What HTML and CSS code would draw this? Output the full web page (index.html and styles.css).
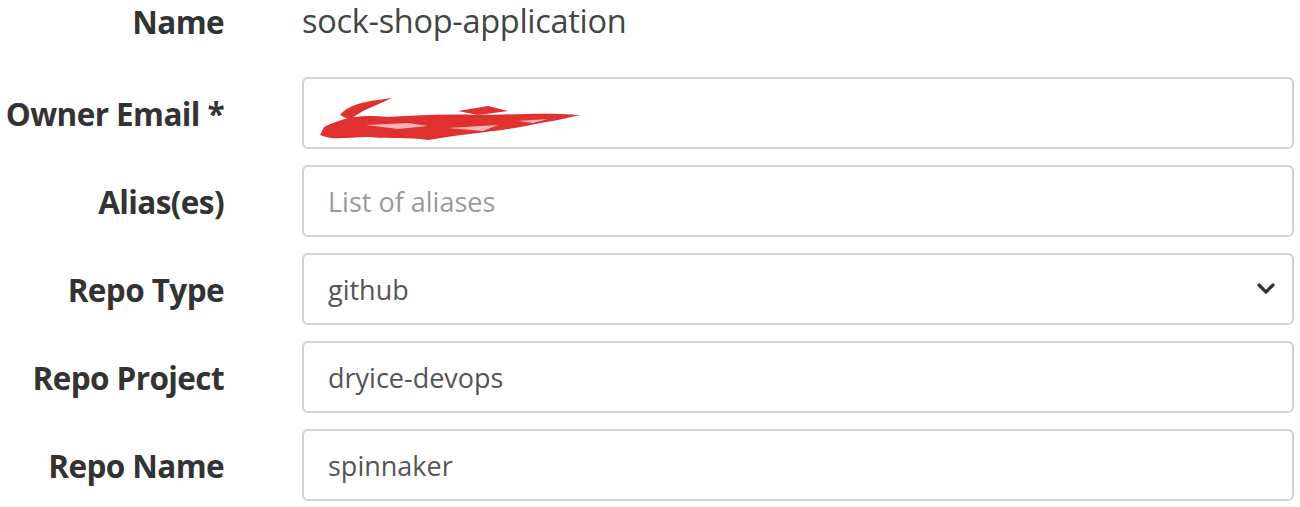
FILE: index.html
```html
<!DOCTYPE html>
<html>
<head>
<meta charset="utf-8">
<link rel="stylesheet" href="styles.css">
</head>
<body>
<form class="form">
  <div class="row row-name">
    <label class="label">Name</label>
    <div class="static">sock-shop-application</div>
  </div>
  <div class="row">
    <label class="label">Owner Email *</label>
    <div class="field">
      <svg class="redact" width="280" height="60" viewBox="0 0 280 60">
        <path d="M16 42 C40 30 60 30 80 32 C110 30 140 29 170 30 C200 30 235 27 272 30 L250 35 C230 38 220 41 200 44 C180 47 150 50 120 55 C100 52 80 54 60 52 C40 52 25 56 12 50 Z" fill="#e03030"/>
        <path d="M32 30 C40 20 55 17 70 15 L84 13 L64 22 C54 26 48 30 42 35 Z" fill="#e03030"/>
        <path d="M58 40 L100 38 L120 41 L90 44 Z M140 43 L190 40 L175 46 Z M210 36 L240 34 L225 38 Z" fill="#f3b5b5"/>
        <path d="M150 26 L180 21 L200 26 L170 30 Z" fill="#e03030"/>
      </svg>
    </div>
  </div>
  <div class="row">
    <label class="label">Alias(es)</label>
    <div class="field placeholder">List of aliases</div>
  </div>
  <div class="row">
    <label class="label">Repo Type</label>
    <div class="field select">
      <span>github</span>
      <svg class="chev" width="20" height="14" viewBox="0 0 20 14"><path d="M3 3 L10 10 L17 3" fill="none" stroke="#333" stroke-width="3.2" stroke-linecap="round" stroke-linejoin="round"/></svg>
    </div>
  </div>
  <div class="row">
    <label class="label">Repo Project</label>
    <div class="field">dryice-devops</div>
  </div>
  <div class="row">
    <label class="label">Repo Name</label>
    <div class="field">spinnaker</div>
  </div>
</form>
</body>
</html>
```
FILE: styles.css
```css
* { box-sizing: border-box; }
html, body { margin: 0; padding: 0; background: #fff; }
body {
  font-family: "Open Sans", "Lato", sans-serif;
  width: 1300px;
  height: 507px;
  overflow: hidden;
}
.form {
  display: flex;
  flex-direction: column;
  gap: 16px;
  padding: 0 6px 0 0;
}
.row {
  display: grid;
  grid-template-columns: 224px 1fr;
  column-gap: 78px;
  align-items: center;
}
.row-name {
  height: 38px;
  margin-bottom: 23px;
}
.label {
  text-align: right;
  font-weight: 700;
  font-size: 31.5px;
  color: #333;
  white-space: nowrap;
  letter-spacing: -0.6px;
}
.static {
  font-size: 32.5px;
  color: #444;
  letter-spacing: -0.3px;
  margin-top: -2px;
}
.field {
  height: 72px;
  border: 2px solid #d2d2d2;
  border-radius: 6px;
  display: flex;
  align-items: center;
  padding: 0 24px;
  font-size: 27px;
  color: #555;
  position: relative;
}
.placeholder { color: #9a9a9a; }
.select { justify-content: space-between; padding-right: 16px; }
.redact { position: absolute; left: 4px; top: 6px; }
```
